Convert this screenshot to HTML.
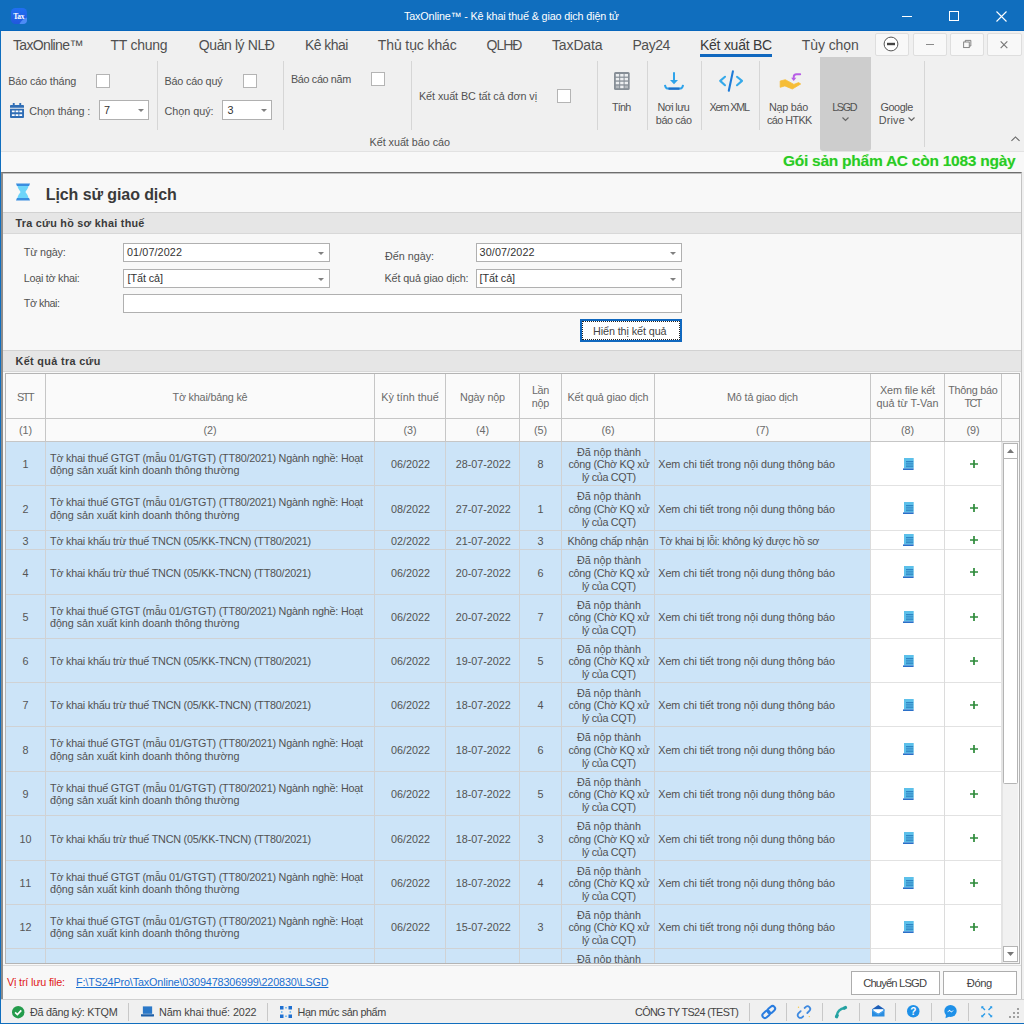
<!DOCTYPE html>
<html lang="vi"><head><meta charset="utf-8"><title>TaxOnline</title>
<style>
*{box-sizing:border-box;margin:0;padding:0}
html,body{width:1024px;height:1024px;overflow:hidden;background:#f0f0f0}
body{font-family:"Liberation Sans","DejaVu Sans",sans-serif;font-size:11px;color:#525252;position:relative}
.a{position:absolute;white-space:nowrap}
svg{position:absolute;display:block;overflow:visible}
#title{left:0;top:0;width:1024px;height:31px;background:#106ebe;border-bottom:1px solid #0766bc}
#title .t{left:0;width:1024px;text-align:center;top:9px;color:#fff;font-size:11px;line-height:14px}
#lb{left:0;top:31px;width:1px;height:993px;background:#106ebe}
#bb{left:0;top:1023px;width:1024px;height:1px;background:#106ebe}
.tab{top:35px;font-size:14.5px;line-height:18px;color:#444}
.wb{top:33px;height:22.500px;width:34.300px;background:#f8f8f8;border:1px solid #dedede;border-radius:2px}
.vsep{width:1px;background:#d6d6d6;top:61px;height:69px}
.rl{font-size:11px;line-height:13px;color:#444}
.cb{width:14px;height:14px;background:#fff;border:1px solid #b4b4b4}
.combo{background:#fff;border:1px solid #b0b0b0;height:20px;font-size:11px;line-height:17px;padding-left:4px;color:#333}
.combo:after{content:"";position:absolute;right:4.5px;top:8px;border:3px solid transparent;border-top:3px solid #808080;border-bottom:0}
.rb{font-size:11px;line-height:13px;color:#444;text-align:center}
#strip{left:1px;top:151px;width:1023px;height:21px;background:#f8f8f8;border-top:1px solid #e2e2e2}
#green{right:8px;top:151px;font-size:15px;line-height:20px;font-weight:bold;color:#22c322;text-shadow:0 0 1px #b6f0b6}
#panel{left:1px;top:172px;width:1021px;height:827px;background:#f8f8f8;border-top:1px solid #6e6e6e;border-left:2px solid #8c8c8c;border-right:1px solid #c4c4c4}
#ptitle{left:46px;top:183px;font-size:16.5px;line-height:20px;font-weight:bold;color:#3a3a3a}
.band{left:3px;width:1018px;height:22px;background:#e6e6e6;border-top:1px solid #d2d2d2;border-bottom:1px solid #d8d8d8;font-weight:bold;font-size:11px;line-height:20px;padding-left:12px;color:#3a3a3a}
.fl{font-size:11px;line-height:13px;color:#444}
.fc{background:#fff;border:1px solid #b0b0b0;height:19px;font-size:11px;line-height:17px;padding-left:3px;color:#333}
.dd:after{content:"";position:absolute;right:5px;top:8px;border:3px solid transparent;border-top:3px solid #808080;border-bottom:0}
#btn{left:580px;top:319px;width:102px;height:22.500px;border:2px solid #1068bf;background:#fff;outline:1px dotted #222;outline-offset:-3px}
#grid{left:5px;top:373px;width:1015px;height:591px;background:#fff;border:1px solid #b4b4b4}
#gb{left:6px;top:442px;width:995px;height:521px;overflow:hidden}
#foot{left:3px;top:964px;width:1018px;height:35px;background:#f8f8f8}
.fbtn{top:971px;height:24px;background:#fff;border:1px solid #adadad;text-align:center;font-size:11px;line-height:22px;color:#333}
#status{left:1px;top:999px;width:1023px;height:24px;background:#f0f0f0;border-top:1px solid #d0d0d0}
.st{top:1006px;font-size:11px;line-height:13px;color:#333}
.ssep{top:1003px;width:1px;height:18px;background:#c8c8c8}
.hl{height:1px;background:#c6c6c6}
.vl{width:1px;background:#c6c6c6}
.rw{left:0;width:995px;background:linear-gradient(90deg,#d0d2d4 864px,#e2e2e2 864px) bottom/100% 1px no-repeat,linear-gradient(90deg,#cce4f8 864px,#fff 864px)}
.vlb{top:0;width:1px;height:521px;background:#d0d2d4}
.vlw{top:0;width:1px;height:521px;background:#dcdcdc}
.sb{width:15px;background:#fff;border:1px solid #b4b4b4}
</style></head><body>
<div id="title" class="a"></div>
<span class="a " style="left:404px;top:9px;font-size:10.8px;line-height:14px;color:#fff;letter-spacing:-0.146px;">TaxOnline™ - Kê khai thuế &amp; giao dịch điện tử</span>
<svg style="left:11px;top:8px" width="16" height="16" viewBox="0 0 16 16"><defs><linearGradient id="ig" x1="0" y1="0" x2="0" y2="1"><stop offset="0" stop-color="#1f6ff2"/><stop offset="1" stop-color="#2257dc"/></linearGradient></defs><rect width="16" height="16" rx="4.500" fill="url(#ig)"/><path d="M8.500 16c1.500-3 4-5.500 7.500-6.500V12a4 4 0 0 1-4 4z" fill="#4d8cf5"/><text x="7.800" y="10.500" font-size="7.500" font-family="Liberation Serif,serif" font-weight="bold" fill="#fff" text-anchor="middle" letter-spacing="-.3">Tax</text></svg>
<svg style="left:895px;top:4.600px" width="120" height="22" viewBox="0 0 120 22"><path d="M7 11.5h10" stroke="#fff" stroke-width="1"/><rect x="54.5" y="6.5" width="9" height="9" fill="none" stroke="#fff" stroke-width="1"/><path d="M101.5 6.5l10 10M111.5 6.5l-10 10" stroke="#fff" stroke-width="1.1"/></svg>
<div id="lb" class="a"></div><div id="bb" class="a"></div>

<span class="a " style="left:13px;top:36px;font-size:14px;line-height:18px;color:#505050;letter-spacing:-0.660px;">TaxOnline™</span>
<span class="a " style="left:110.5px;top:36px;font-size:14px;line-height:18px;color:#505050;letter-spacing:-0.252px;">TT chung</span>
<span class="a " style="left:198.75px;top:36px;font-size:14px;line-height:18px;color:#505050;letter-spacing:-0.396px;">Quản lý NLĐ</span>
<span class="a " style="left:305px;top:36px;font-size:14px;line-height:18px;color:#505050;letter-spacing:-0.570px;">Kê khai</span>
<span class="a " style="left:377.75px;top:36px;font-size:14px;line-height:18px;color:#505050;letter-spacing:-0.101px;">Thủ tục khác</span>
<span class="a " style="left:486.5px;top:36px;font-size:14px;line-height:18px;color:#505050;letter-spacing:-0.973px;">QLHĐ</span>
<span class="a " style="left:552px;top:36px;font-size:14px;line-height:18px;color:#505050;letter-spacing:-0.132px;">TaxData</span>
<span class="a " style="left:632.5px;top:36px;font-size:14px;line-height:18px;color:#505050;letter-spacing:-0.490px;">Pay24</span>
<span class="a " style="left:700px;top:36px;font-size:14px;line-height:18px;color:#3a3a3a;letter-spacing:-0.257px;">Kết xuất BC</span>
<span class="a " style="left:801.75px;top:36px;font-size:14px;line-height:18px;color:#505050;letter-spacing:-0.079px;">Tùy chọn</span>
<div class="a" style="left:700px;top:54px;width:72px;height:3px;background:#1068bf"></div>

<div class="a wb" style="left:874.800px"><svg style="left:7.700px;top:1.500px" width="16" height="16" viewBox="0 0 16 16"><circle cx="8" cy="8" r="6.900" fill="#fff" stroke="#555" stroke-width="1"/><path d="M4 8h8" stroke="#444" stroke-width="2.400"/></svg></div>
<div class="a wb" style="left:912.600px"><div class="a" style="left:12.400px;top:10px;width:8px;height:1px;background:#8a8a8a"></div></div>
<div class="a wb" style="left:949.700px"><svg style="left:12.300px;top:6.200px" width="8.500" height="8" viewBox="0 0 10 10"><path d="M2.500 2.500v-2h7v7h-2" fill="none" stroke="#777" stroke-width="1.100"/><rect x=".5" y="2.500" width="7" height="7" fill="none" stroke="#777" stroke-width="1.100"/></svg></div>
<div class="a wb" style="left:987.300px"><svg style="left:11.700px;top:6.800px" width="8" height="7.500" viewBox="0 0 9 9"><path d="M.5.5l8 8M8.500.5l-8 8" stroke="#777" stroke-width="1.400"/></svg></div>

<span class="a " style="left:8.25px;top:74px;font-size:10.8px;line-height:14px;letter-spacing:-0.131px;">Báo cáo tháng</span>
<div class="a cb" style="left:96px;top:74px"></div>
<svg style="left:10px;top:103px" width="14" height="15" viewBox="0 0 15 16"><path d="M3 0h2v2h5V0h2v2h2a1 1 0 0 1 1 1v2H0V3a1 1 0 0 1 1-1h2zM0 6h15v9a1 1 0 0 1-1 1H1a1 1 0 0 1-1-1z" fill="#2f6db5"/><path d="M2 8h3v2H2zM6 8h3v2H6zM10 8h3v2h-3zM2 12h3v2H2zM6 12h3v2H6zM10 12h3v2h-3z" fill="#fff"/></svg>
<span class="a " style="left:29.25px;top:104px;font-size:10.8px;line-height:14px;letter-spacing:-0.073px;">Chọn tháng :</span>
<div class="a combo" style="left:99px;top:100px;width:50px"></div><span class="a " style="left:104px;top:103px;font-size:10.8px;line-height:14px;color:#333;">7</span>
<div class="a vsep" style="left:157px"></div>
<span class="a " style="left:164.5px;top:74px;font-size:10.8px;line-height:14px;letter-spacing:-0.193px;">Báo cáo quý</span>
<div class="a cb" style="left:243px;top:74px"></div>
<span class="a " style="left:164.5px;top:104px;font-size:10.8px;line-height:14px;letter-spacing:-0.026px;">Chọn quý:</span>
<div class="a combo" style="left:222px;top:100px;width:50px"></div><span class="a " style="left:227.5px;top:103px;font-size:10.8px;line-height:14px;color:#333;">3</span>
<div class="a vsep" style="left:283px"></div>
<span class="a " style="left:291px;top:71.5px;font-size:10.8px;line-height:14px;letter-spacing:-0.345px;">Báo cáo năm</span>
<div class="a cb" style="left:371px;top:72px"></div>
<div class="a vsep" style="left:411px"></div>
<span class="a " style="left:419px;top:89px;font-size:10.8px;line-height:14px;letter-spacing:-0.078px;">Kết xuất BC tất cả đơn vị</span>
<div class="a cb" style="left:557px;top:89px"></div>
<span class="a " style="left:369.5px;top:135px;font-size:10.8px;line-height:14px;letter-spacing:-0.035px;">Kết xuất báo cáo</span>
<div class="a vsep" style="left:597px"></div>
<svg style="left:613.7px;top:71.9px" width="15.7" height="18" viewBox="0 0 15.7 18"><rect width="15.7" height="18" rx="1.5" fill="#868e96"/><g fill="#eceef0"><rect x="1.8" y="2" width="3.4" height="2.6"/><rect x="6.2" y="2" width="3.4" height="2.6"/><rect x="10.6" y="2" width="3.4" height="2.6"/><rect x="1.8" y="5.800" width="3.4" height="2.6"/><rect x="6.2" y="5.800" width="3.4" height="2.6"/><rect x="10.6" y="5.800" width="3.4" height="2.6"/><rect x="1.8" y="9.700" width="3.4" height="2.6"/><rect x="6.2" y="9.700" width="3.4" height="2.6"/><rect x="10.6" y="9.700" width="3.4" height="2.6"/><rect x="6.2" y="13.600" width="3.4" height="2.6"/></g><g fill="#b4b9be"><rect x="1.8" y="13.600" width="3.4" height="2.6"/><rect x="10.6" y="13.600" width="3.4" height="2.6"/></g></svg>
<span class="a " style="left:612px;top:99.75px;font-size:10.8px;line-height:14px;letter-spacing:-0.746px;">Tính</span>
<div class="a vsep" style="left:647px"></div>
<svg style="left:663px;top:71px" width="22" height="20" viewBox="0 0 22 20"><path d="M11 1.2v9" stroke="#2ea3ea" stroke-width="2"/><path d="M7 8.900h8l-4 4.400z" fill="#2ea3ea"/><path d="M2 13.800c.2 2.500 1.400 3.800 3.600 3.800h10.800c2.200 0 3.400-1.300 3.600-3.800" fill="none" stroke="#2ea3ea" stroke-width="2"/><path d="M5.500 17.700h11" stroke="#1e6ec8" stroke-width="2.200"/></svg>
<span class="a " style="left:657.5px;top:99.75px;font-size:10.8px;line-height:14px;letter-spacing:-0.603px;">Nơi lưu</span><span class="a " style="left:655.75px;top:112.75px;font-size:10.8px;line-height:14px;letter-spacing:-0.373px;">báo cáo</span>
<div class="a vsep" style="left:701px"></div>
<svg style="left:718px;top:70px" width="26" height="22" viewBox="0 0 26 22"><path d="M7 6.800L2.200 10.900 7 15.200M19 6.800l5 4.100-5 4.300" fill="none" stroke="#35a9ea" stroke-width="2.100" stroke-linecap="round" stroke-linejoin="round"/><path d="M14.900 1.400L10.800 20.700" stroke="#1e7bd8" stroke-width="2.100" stroke-linecap="round"/></svg>
<span class="a " style="left:709.5px;top:99.75px;font-size:10.8px;line-height:14px;letter-spacing:-1.139px;">Xem XML</span>
<div class="a vsep" style="left:759px"></div>
<svg style="left:772px;top:66px" width="40" height="30" viewBox="0 0 40 30"><path d="M8.200 15L13.300 13.700 21.900 18.400 26.600 16.600 28.700 18 20.300 23 12.900 19.900 8.200 21.300z" fill="#f6bd36" stroke="#f6bd36" stroke-width=".8" stroke-linejoin="round"/><path d="M28.200 8.200H24.500Q21.700 8.200 21.700 11V12.500" fill="none" stroke="#b85ee6" stroke-width="1.900" stroke-linecap="round"/><path d="M19.100 11.800L21.700 15 24.300 11.800z" fill="#b85ee6"/></svg>
<span class="a " style="left:769px;top:99.75px;font-size:10.8px;line-height:14px;letter-spacing:-0.281px;">Nạp báo</span><span class="a " style="left:767px;top:112.75px;font-size:10.8px;line-height:14px;letter-spacing:-0.560px;">cáo HTKK</span>
<div class="a" style="left:820px;top:57px;width:51px;height:94px;background:#cdcdcd;border-radius:0 0 3px 3px"></div>
<span class="a " style="left:832.25px;top:99.75px;font-size:10.8px;line-height:14px;letter-spacing:-1.402px;">LSGD</span>
<svg style="left:842px;top:117px" width="7" height="4" viewBox="0 0 7 4"><path d="M.5.5l3 3 3-3" fill="none" stroke="#666" stroke-width="1.2"/></svg>
<span class="a " style="left:880.5px;top:99.75px;font-size:10.8px;line-height:14px;letter-spacing:-0.423px;">Google</span><span class="a " style="left:878.75px;top:112.75px;font-size:10.8px;line-height:14px;letter-spacing:0.177px;">Drive</span>
<svg style="left:907.500px;top:117px" width="7" height="4" viewBox="0 0 7 4"><path d="M.5.5l3 3 3-3" fill="none" stroke="#666" stroke-width="1.2"/></svg>
<div class="a vsep" style="left:924px;height:86px"></div>
<svg style="left:1010.500px;top:136px" width="9" height="5.400" viewBox="0 0 10 6"><path d="M.5 5.500l4.500-4.500 4.500 4.500" fill="none" stroke="#666" stroke-width="1.2"/></svg>
<div id="strip" class="a"></div>
<span class="a " style="left:783px;top:151.2px;font-size:15.5px;line-height:20px;font-weight:bold;color:#27cb27;letter-spacing:-0.254px;text-shadow:0 0 1px #c8f5a0;">Gói sản phẩm AC còn 1083 ngày</span>
<div id="panel" class="a"></div><div class="a" style="left:3px;top:173px;width:1018px;height:1px;background:#c0c0c0"></div>
<svg style="left:16px;top:183px" width="14" height="18" viewBox="0 0 15 18"><path d="M1.500 1h12c0 4.500-2.500 6-3.300 8 .8 2 3.300 3.500 3.300 8h-12c0-4.500 2.500-6 3.300-8-.8-2-3.300-3.500-3.300-8z" fill="#6dd5fa"/><path d="M0 0h15l-1 2.500H1zM1 15.500h13l1 2.500H0z" fill="#3a8ee0"/></svg>
<span class="a " style="left:45.75px;top:184.5px;font-size:16px;line-height:20px;font-weight:bold;color:#3a3a3a;letter-spacing:-0.091px;">Lịch sử giao dịch</span>
<div class="a band" style="top:212px"></div><span class="a " style="left:15.5px;top:215.75px;font-size:10.8px;line-height:14px;font-weight:bold;color:#3a3a3a;letter-spacing:0.272px;">Tra cứu hồ sơ khai thuế</span>
<span class="a " style="left:23.75px;top:245px;font-size:10.8px;line-height:14px;letter-spacing:-0.167px;">Từ ngày:</span>
<div class="a fc dd" style="left:123px;top:243px;width:207px"></div><span class="a " style="left:127px;top:245px;font-size:10.8px;line-height:14px;color:#333;letter-spacing:0.100px;">01/07/2022</span>
<span class="a " style="left:23.75px;top:270.75px;font-size:10.8px;line-height:14px;letter-spacing:-0.265px;">Loại tờ khai:</span>
<div class="a fc dd" style="left:123px;top:269px;width:207px"></div><span class="a " style="left:127.5px;top:271px;font-size:10.8px;line-height:14px;color:#333;letter-spacing:-0.069px;">[Tất cả]</span>
<span class="a " style="left:23.75px;top:295.75px;font-size:10.8px;line-height:14px;letter-spacing:-0.465px;">Tờ khai:</span>
<div class="a fc" style="left:123px;top:294px;width:559px"></div>
<span class="a " style="left:385px;top:248.6px;font-size:10.8px;line-height:14px;letter-spacing:-0.026px;">Đến ngày:</span>
<div class="a fc dd" style="left:476px;top:243px;width:206px"></div><span class="a " style="left:479.6px;top:245px;font-size:10.8px;line-height:14px;color:#333;letter-spacing:0.100px;">30/07/2022</span>
<span class="a " style="left:384.5px;top:270.75px;font-size:10.8px;line-height:14px;letter-spacing:-0.140px;">Kết quả giao dịch:</span>
<div class="a fc dd" style="left:476px;top:269px;width:206px"></div><span class="a " style="left:479.6px;top:271px;font-size:10.8px;line-height:14px;color:#333;letter-spacing:-0.069px;">[Tất cả]</span>
<div id="btn" class="a"></div><span class="a " style="left:593px;top:324px;font-size:10.8px;line-height:14px;color:#444;letter-spacing:-0.099px;">Hiển thị kết quả</span>
<div class="a band" style="top:350px"></div><span class="a " style="left:15.5px;top:353.75px;font-size:10.8px;line-height:14px;font-weight:bold;color:#3a3a3a;letter-spacing:0.358px;">Kết quả tra cứu</span>
<div id="grid" class="a"></div>
<div class="a" style="left:6px;top:374px;width:1013px;height:68px;background:#fafafa"></div>
<div class="a hl" style="left:6px;top:418px;width:1013px"></div><div class="a hl" style="left:6px;top:441px;width:1013px"></div>
<div class="a vl" style="left:45px;top:374px;height:68px"></div>
<div class="a vl" style="left:374px;top:374px;height:68px"></div>
<div class="a vl" style="left:445px;top:374px;height:68px"></div>
<div class="a vl" style="left:519px;top:374px;height:68px"></div>
<div class="a vl" style="left:561px;top:374px;height:68px"></div>
<div class="a vl" style="left:654px;top:374px;height:68px"></div>
<div class="a vl" style="left:870px;top:374px;height:68px"></div>
<div class="a vl" style="left:944px;top:374px;height:68px"></div>
<div class="a vl" style="left:1001px;top:374px;height:68px"></div>
<span class="a " style="left:17.0px;top:389.75px;font-size:10.8px;line-height:14px;color:#6a6a6a;letter-spacing:-1.363px;">STT</span>
<span class="a " style="left:172.5px;top:389.75px;font-size:10.8px;line-height:14px;color:#6a6a6a;letter-spacing:-0.200px;">Tờ khai/bảng kê</span>
<span class="a " style="left:381.25px;top:389.75px;font-size:10.8px;line-height:14px;color:#6a6a6a;letter-spacing:-0.011px;">Kỳ tính thuế</span>
<span class="a " style="left:460.0px;top:389.75px;font-size:10.8px;line-height:14px;color:#6a6a6a;letter-spacing:-0.165px;">Ngày nộp</span>
<span class="a " style="left:532.0px;top:382.75px;font-size:10.8px;line-height:14px;color:#6a6a6a;letter-spacing:-0.406px;">Lần</span><span class="a " style="left:531.75px;top:395.55px;font-size:10.8px;line-height:14px;color:#6a6a6a;letter-spacing:-0.206px;">nộp</span>
<span class="a " style="left:567.5px;top:389.75px;font-size:10.8px;line-height:14px;color:#6a6a6a;letter-spacing:-0.149px;">Kết quả giao dịch</span>
<span class="a " style="left:727.0px;top:389.75px;font-size:10.8px;line-height:14px;color:#6a6a6a;letter-spacing:-0.154px;">Mô tả giao dịch</span>
<span class="a " style="left:880.0px;top:382.75px;font-size:10.8px;line-height:14px;color:#6a6a6a;letter-spacing:-0.122px;">Xem file kết</span><span class="a " style="left:876.5px;top:395.55px;font-size:10.8px;line-height:14px;color:#6a6a6a;letter-spacing:-0.005px;">quả từ T-Van</span>
<span class="a " style="left:948.25px;top:382.75px;font-size:10.8px;line-height:14px;color:#6a6a6a;letter-spacing:-0.252px;">Thông báo</span><span class="a " style="left:964.5px;top:395.55px;font-size:10.8px;line-height:14px;color:#6a6a6a;letter-spacing:-1.600px;">TCT</span>
<span class="a " style="left:19.0px;top:422.75px;font-size:10.8px;line-height:14px;color:#6a6a6a;letter-spacing:-0.081px;">(1)</span>
<span class="a " style="left:203.5px;top:422.75px;font-size:10.8px;line-height:14px;color:#6a6a6a;letter-spacing:-0.081px;">(2)</span>
<span class="a " style="left:403.5px;top:422.75px;font-size:10.8px;line-height:14px;color:#6a6a6a;letter-spacing:-0.081px;">(3)</span>
<span class="a " style="left:476.0px;top:422.75px;font-size:10.8px;line-height:14px;color:#6a6a6a;letter-spacing:-0.081px;">(4)</span>
<span class="a " style="left:534.0px;top:422.75px;font-size:10.8px;line-height:14px;color:#6a6a6a;letter-spacing:-0.081px;">(5)</span>
<span class="a " style="left:601.5px;top:422.75px;font-size:10.8px;line-height:14px;color:#6a6a6a;letter-spacing:-0.081px;">(6)</span>
<span class="a " style="left:756.0px;top:422.75px;font-size:10.8px;line-height:14px;color:#6a6a6a;letter-spacing:-0.081px;">(7)</span>
<span class="a " style="left:901.0px;top:422.75px;font-size:10.8px;line-height:14px;color:#6a6a6a;letter-spacing:-0.081px;">(8)</span>
<span class="a " style="left:966.5px;top:422.75px;font-size:10.8px;line-height:14px;color:#6a6a6a;letter-spacing:-0.081px;">(9)</span>
<div id="gb" class="a">
<div class="a rw" style="top:0px;height:44px"></div><span class="a " style="left:16.5px;top:15px;font-size:10.8px;line-height:14px;color:#555;letter-spacing:0.000px;">1</span><span class="a " style="left:44px;top:8.5px;font-size:10.8px;line-height:14px;letter-spacing:-0.211px;">Tờ khai thuế GTGT (mẫu 01/GTGT) (TT80/2021) Ngành nghề: Hoạt</span><span class="a " style="left:44px;top:21.2px;font-size:10.8px;line-height:14px;letter-spacing:-0.069px;">động sản xuất kinh doanh thông thường</span><span class="a " style="left:384.9px;top:15px;font-size:10.8px;line-height:14px;letter-spacing:-0.005px;">06/2022</span><span class="a " style="left:449.75px;top:15px;font-size:10.8px;line-height:14px;letter-spacing:-0.025px;">28-07-2022</span><span class="a " style="left:531.5px;top:15px;font-size:10.8px;line-height:14px;letter-spacing:0.000px;">8</span><span class="a " style="left:571.0px;top:2.5px;font-size:10.8px;line-height:14px;letter-spacing:-0.073px;">Đã nộp thành</span><span class="a " style="left:562.5px;top:15.3px;font-size:10.8px;line-height:14px;letter-spacing:-0.284px;">công (Chờ KQ xử</span><span class="a " style="left:576.0px;top:28.1px;font-size:10.8px;line-height:14px;letter-spacing:-0.342px;">lý của CQT)</span><span class="a " style="left:652.25px;top:15px;font-size:10.8px;line-height:14px;letter-spacing:-0.075px;">Xem chi tiết trong nội dung thông báo</span><svg style="left:897px;top:15.5px" width="11" height="12" viewBox="0 0 11 12"><path d="M1 0h9.700v10.500H1z" fill="#5cc0ea"/><path d="M3 3.500h7.200M3 5.200h7.200M3 7h7.200M3 8.700h7.200" stroke="#2a7ec0" stroke-width=".9"/><path d="M0 10.400h10.600V12H0z" fill="#2a6fc8"/></svg><svg style="left:963.7px;top:17.69999999999999px" width="8" height="8" viewBox="0 0 8 8"><path d="M0 4h8M4 0v8" stroke="#2d8a3a" stroke-width="1.700"/></svg><div class="a rw" style="top:44px;height:45px"></div><span class="a " style="left:16.5px;top:59.5px;font-size:10.8px;line-height:14px;color:#555;letter-spacing:0.000px;">2</span><span class="a " style="left:44px;top:53px;font-size:10.8px;line-height:14px;letter-spacing:-0.211px;">Tờ khai thuế GTGT (mẫu 01/GTGT) (TT80/2021) Ngành nghề: Hoạt</span><span class="a " style="left:44px;top:65.7px;font-size:10.8px;line-height:14px;letter-spacing:-0.069px;">động sản xuất kinh doanh thông thường</span><span class="a " style="left:384.9px;top:59.5px;font-size:10.8px;line-height:14px;letter-spacing:-0.005px;">08/2022</span><span class="a " style="left:449.75px;top:59.5px;font-size:10.8px;line-height:14px;letter-spacing:-0.025px;">27-07-2022</span><span class="a " style="left:531.5px;top:59.5px;font-size:10.8px;line-height:14px;letter-spacing:0.000px;">1</span><span class="a " style="left:571.0px;top:47px;font-size:10.8px;line-height:14px;letter-spacing:-0.073px;">Đã nộp thành</span><span class="a " style="left:562.5px;top:59.8px;font-size:10.8px;line-height:14px;letter-spacing:-0.284px;">công (Chờ KQ xử</span><span class="a " style="left:576.0px;top:72.6px;font-size:10.8px;line-height:14px;letter-spacing:-0.342px;">lý của CQT)</span><span class="a " style="left:652.25px;top:59.5px;font-size:10.8px;line-height:14px;letter-spacing:-0.075px;">Xem chi tiết trong nội dung thông báo</span><svg style="left:897px;top:60.0px" width="11" height="12" viewBox="0 0 11 12"><path d="M1 0h9.700v10.500H1z" fill="#5cc0ea"/><path d="M3 3.500h7.200M3 5.200h7.200M3 7h7.200M3 8.700h7.200" stroke="#2a7ec0" stroke-width=".9"/><path d="M0 10.400h10.600V12H0z" fill="#2a6fc8"/></svg><svg style="left:963.7px;top:62.19999999999999px" width="8" height="8" viewBox="0 0 8 8"><path d="M0 4h8M4 0v8" stroke="#2d8a3a" stroke-width="1.700"/></svg><div class="a rw" style="top:89px;height:19px"></div><span class="a " style="left:16.5px;top:91.5px;font-size:10.8px;line-height:14px;color:#555;letter-spacing:0.000px;">3</span><span class="a " style="left:44px;top:91.5px;font-size:10.8px;line-height:14px;letter-spacing:-0.220px;">Tờ khai khấu trừ thuế TNCN (05/KK-TNCN) (TT80/2021)</span><span class="a " style="left:384.9px;top:91.5px;font-size:10.8px;line-height:14px;letter-spacing:-0.005px;">02/2022</span><span class="a " style="left:449.75px;top:91.5px;font-size:10.8px;line-height:14px;letter-spacing:-0.025px;">21-07-2022</span><span class="a " style="left:531.5px;top:91.5px;font-size:10.8px;line-height:14px;letter-spacing:0.000px;">3</span><span class="a " style="left:561.5px;top:91.5px;font-size:10.8px;line-height:14px;letter-spacing:-0.252px;">Không chấp nhận</span><span class="a " style="left:653.25px;top:91.5px;font-size:10.8px;line-height:14px;letter-spacing:-0.293px;">Tờ khai bị lỗi: không ký được hồ sơ</span><svg style="left:897px;top:92.0px" width="11" height="12" viewBox="0 0 11 12"><path d="M1 0h9.700v10.500H1z" fill="#5cc0ea"/><path d="M3 3.500h7.200M3 5.200h7.200M3 7h7.200M3 8.700h7.200" stroke="#2a7ec0" stroke-width=".9"/><path d="M0 10.400h10.600V12H0z" fill="#2a6fc8"/></svg><svg style="left:963.7px;top:94.20000000000005px" width="8" height="8" viewBox="0 0 8 8"><path d="M0 4h8M4 0v8" stroke="#2d8a3a" stroke-width="1.700"/></svg><div class="a rw" style="top:108px;height:45px"></div><span class="a " style="left:16.5px;top:123.5px;font-size:10.8px;line-height:14px;color:#555;letter-spacing:0.000px;">4</span><span class="a " style="left:44px;top:123.5px;font-size:10.8px;line-height:14px;letter-spacing:-0.220px;">Tờ khai khấu trừ thuế TNCN (05/KK-TNCN) (TT80/2021)</span><span class="a " style="left:384.9px;top:123.5px;font-size:10.8px;line-height:14px;letter-spacing:-0.005px;">06/2022</span><span class="a " style="left:449.75px;top:123.5px;font-size:10.8px;line-height:14px;letter-spacing:-0.025px;">20-07-2022</span><span class="a " style="left:531.5px;top:123.5px;font-size:10.8px;line-height:14px;letter-spacing:0.000px;">6</span><span class="a " style="left:571.0px;top:111px;font-size:10.8px;line-height:14px;letter-spacing:-0.073px;">Đã nộp thành</span><span class="a " style="left:562.5px;top:123.8px;font-size:10.8px;line-height:14px;letter-spacing:-0.284px;">công (Chờ KQ xử</span><span class="a " style="left:576.0px;top:136.6px;font-size:10.8px;line-height:14px;letter-spacing:-0.342px;">lý của CQT)</span><span class="a " style="left:652.25px;top:123.5px;font-size:10.8px;line-height:14px;letter-spacing:-0.075px;">Xem chi tiết trong nội dung thông báo</span><svg style="left:897px;top:124.0px" width="11" height="12" viewBox="0 0 11 12"><path d="M1 0h9.700v10.500H1z" fill="#5cc0ea"/><path d="M3 3.500h7.200M3 5.200h7.200M3 7h7.200M3 8.700h7.200" stroke="#2a7ec0" stroke-width=".9"/><path d="M0 10.400h10.600V12H0z" fill="#2a6fc8"/></svg><svg style="left:963.7px;top:126.20000000000005px" width="8" height="8" viewBox="0 0 8 8"><path d="M0 4h8M4 0v8" stroke="#2d8a3a" stroke-width="1.700"/></svg><div class="a rw" style="top:153px;height:44px"></div><span class="a " style="left:16.5px;top:168px;font-size:10.8px;line-height:14px;color:#555;letter-spacing:0.000px;">5</span><span class="a " style="left:44px;top:161.5px;font-size:10.8px;line-height:14px;letter-spacing:-0.211px;">Tờ khai thuế GTGT (mẫu 01/GTGT) (TT80/2021) Ngành nghề: Hoạt</span><span class="a " style="left:44px;top:174.2px;font-size:10.8px;line-height:14px;letter-spacing:-0.069px;">động sản xuất kinh doanh thông thường</span><span class="a " style="left:384.9px;top:168px;font-size:10.8px;line-height:14px;letter-spacing:-0.005px;">06/2022</span><span class="a " style="left:449.75px;top:168px;font-size:10.8px;line-height:14px;letter-spacing:-0.025px;">20-07-2022</span><span class="a " style="left:531.5px;top:168px;font-size:10.8px;line-height:14px;letter-spacing:0.000px;">7</span><span class="a " style="left:571.0px;top:155.5px;font-size:10.8px;line-height:14px;letter-spacing:-0.073px;">Đã nộp thành</span><span class="a " style="left:562.5px;top:168.3px;font-size:10.8px;line-height:14px;letter-spacing:-0.284px;">công (Chờ KQ xử</span><span class="a " style="left:576.0px;top:181.1px;font-size:10.8px;line-height:14px;letter-spacing:-0.342px;">lý của CQT)</span><span class="a " style="left:652.25px;top:168px;font-size:10.8px;line-height:14px;letter-spacing:-0.075px;">Xem chi tiết trong nội dung thông báo</span><svg style="left:897px;top:168.5px" width="11" height="12" viewBox="0 0 11 12"><path d="M1 0h9.700v10.500H1z" fill="#5cc0ea"/><path d="M3 3.500h7.200M3 5.200h7.200M3 7h7.200M3 8.700h7.200" stroke="#2a7ec0" stroke-width=".9"/><path d="M0 10.400h10.600V12H0z" fill="#2a6fc8"/></svg><svg style="left:963.7px;top:170.70000000000005px" width="8" height="8" viewBox="0 0 8 8"><path d="M0 4h8M4 0v8" stroke="#2d8a3a" stroke-width="1.700"/></svg><div class="a rw" style="top:197px;height:44px"></div><span class="a " style="left:16.5px;top:212px;font-size:10.8px;line-height:14px;color:#555;letter-spacing:0.000px;">6</span><span class="a " style="left:44px;top:212px;font-size:10.8px;line-height:14px;letter-spacing:-0.220px;">Tờ khai khấu trừ thuế TNCN (05/KK-TNCN) (TT80/2021)</span><span class="a " style="left:384.9px;top:212px;font-size:10.8px;line-height:14px;letter-spacing:-0.005px;">06/2022</span><span class="a " style="left:449.75px;top:212px;font-size:10.8px;line-height:14px;letter-spacing:-0.025px;">19-07-2022</span><span class="a " style="left:531.5px;top:212px;font-size:10.8px;line-height:14px;letter-spacing:0.000px;">5</span><span class="a " style="left:571.0px;top:199.5px;font-size:10.8px;line-height:14px;letter-spacing:-0.073px;">Đã nộp thành</span><span class="a " style="left:562.5px;top:212.3px;font-size:10.8px;line-height:14px;letter-spacing:-0.284px;">công (Chờ KQ xử</span><span class="a " style="left:576.0px;top:225.1px;font-size:10.8px;line-height:14px;letter-spacing:-0.342px;">lý của CQT)</span><span class="a " style="left:652.25px;top:212px;font-size:10.8px;line-height:14px;letter-spacing:-0.075px;">Xem chi tiết trong nội dung thông báo</span><svg style="left:897px;top:212.5px" width="11" height="12" viewBox="0 0 11 12"><path d="M1 0h9.700v10.500H1z" fill="#5cc0ea"/><path d="M3 3.500h7.200M3 5.200h7.200M3 7h7.200M3 8.700h7.200" stroke="#2a7ec0" stroke-width=".9"/><path d="M0 10.400h10.600V12H0z" fill="#2a6fc8"/></svg><svg style="left:963.7px;top:214.70000000000005px" width="8" height="8" viewBox="0 0 8 8"><path d="M0 4h8M4 0v8" stroke="#2d8a3a" stroke-width="1.700"/></svg><div class="a rw" style="top:241px;height:44px"></div><span class="a " style="left:16.5px;top:256px;font-size:10.8px;line-height:14px;color:#555;letter-spacing:0.000px;">7</span><span class="a " style="left:44px;top:256px;font-size:10.8px;line-height:14px;letter-spacing:-0.220px;">Tờ khai khấu trừ thuế TNCN (05/KK-TNCN) (TT80/2021)</span><span class="a " style="left:384.9px;top:256px;font-size:10.8px;line-height:14px;letter-spacing:-0.005px;">06/2022</span><span class="a " style="left:449.75px;top:256px;font-size:10.8px;line-height:14px;letter-spacing:-0.025px;">18-07-2022</span><span class="a " style="left:531.5px;top:256px;font-size:10.8px;line-height:14px;letter-spacing:0.000px;">4</span><span class="a " style="left:571.0px;top:243.5px;font-size:10.8px;line-height:14px;letter-spacing:-0.073px;">Đã nộp thành</span><span class="a " style="left:562.5px;top:256.3px;font-size:10.8px;line-height:14px;letter-spacing:-0.284px;">công (Chờ KQ xử</span><span class="a " style="left:576.0px;top:269.1px;font-size:10.8px;line-height:14px;letter-spacing:-0.342px;">lý của CQT)</span><span class="a " style="left:652.25px;top:256px;font-size:10.8px;line-height:14px;letter-spacing:-0.075px;">Xem chi tiết trong nội dung thông báo</span><svg style="left:897px;top:256.5px" width="11" height="12" viewBox="0 0 11 12"><path d="M1 0h9.700v10.500H1z" fill="#5cc0ea"/><path d="M3 3.500h7.200M3 5.200h7.200M3 7h7.200M3 8.700h7.200" stroke="#2a7ec0" stroke-width=".9"/><path d="M0 10.400h10.600V12H0z" fill="#2a6fc8"/></svg><svg style="left:963.7px;top:258.70000000000005px" width="8" height="8" viewBox="0 0 8 8"><path d="M0 4h8M4 0v8" stroke="#2d8a3a" stroke-width="1.700"/></svg><div class="a rw" style="top:285px;height:45px"></div><span class="a " style="left:16.5px;top:300.5px;font-size:10.8px;line-height:14px;color:#555;letter-spacing:0.000px;">8</span><span class="a " style="left:44px;top:294px;font-size:10.8px;line-height:14px;letter-spacing:-0.211px;">Tờ khai thuế GTGT (mẫu 01/GTGT) (TT80/2021) Ngành nghề: Hoạt</span><span class="a " style="left:44px;top:306.7px;font-size:10.8px;line-height:14px;letter-spacing:-0.069px;">động sản xuất kinh doanh thông thường</span><span class="a " style="left:384.9px;top:300.5px;font-size:10.8px;line-height:14px;letter-spacing:-0.005px;">06/2022</span><span class="a " style="left:449.75px;top:300.5px;font-size:10.8px;line-height:14px;letter-spacing:-0.025px;">18-07-2022</span><span class="a " style="left:531.5px;top:300.5px;font-size:10.8px;line-height:14px;letter-spacing:0.000px;">6</span><span class="a " style="left:571.0px;top:288px;font-size:10.8px;line-height:14px;letter-spacing:-0.073px;">Đã nộp thành</span><span class="a " style="left:562.5px;top:300.8px;font-size:10.8px;line-height:14px;letter-spacing:-0.284px;">công (Chờ KQ xử</span><span class="a " style="left:576.0px;top:313.6px;font-size:10.8px;line-height:14px;letter-spacing:-0.342px;">lý của CQT)</span><span class="a " style="left:652.25px;top:300.5px;font-size:10.8px;line-height:14px;letter-spacing:-0.075px;">Xem chi tiết trong nội dung thông báo</span><svg style="left:897px;top:301.0px" width="11" height="12" viewBox="0 0 11 12"><path d="M1 0h9.700v10.500H1z" fill="#5cc0ea"/><path d="M3 3.500h7.200M3 5.200h7.200M3 7h7.200M3 8.700h7.200" stroke="#2a7ec0" stroke-width=".9"/><path d="M0 10.400h10.600V12H0z" fill="#2a6fc8"/></svg><svg style="left:963.7px;top:303.20000000000005px" width="8" height="8" viewBox="0 0 8 8"><path d="M0 4h8M4 0v8" stroke="#2d8a3a" stroke-width="1.700"/></svg><div class="a rw" style="top:330px;height:44px"></div><span class="a " style="left:16.5px;top:345px;font-size:10.8px;line-height:14px;color:#555;letter-spacing:0.000px;">9</span><span class="a " style="left:44px;top:338.5px;font-size:10.8px;line-height:14px;letter-spacing:-0.211px;">Tờ khai thuế GTGT (mẫu 01/GTGT) (TT80/2021) Ngành nghề: Hoạt</span><span class="a " style="left:44px;top:351.2px;font-size:10.8px;line-height:14px;letter-spacing:-0.069px;">động sản xuất kinh doanh thông thường</span><span class="a " style="left:384.9px;top:345px;font-size:10.8px;line-height:14px;letter-spacing:-0.005px;">06/2022</span><span class="a " style="left:449.75px;top:345px;font-size:10.8px;line-height:14px;letter-spacing:-0.025px;">18-07-2022</span><span class="a " style="left:531.5px;top:345px;font-size:10.8px;line-height:14px;letter-spacing:0.000px;">5</span><span class="a " style="left:571.0px;top:332.5px;font-size:10.8px;line-height:14px;letter-spacing:-0.073px;">Đã nộp thành</span><span class="a " style="left:562.5px;top:345.3px;font-size:10.8px;line-height:14px;letter-spacing:-0.284px;">công (Chờ KQ xử</span><span class="a " style="left:576.0px;top:358.1px;font-size:10.8px;line-height:14px;letter-spacing:-0.342px;">lý của CQT)</span><span class="a " style="left:652.25px;top:345px;font-size:10.8px;line-height:14px;letter-spacing:-0.075px;">Xem chi tiết trong nội dung thông báo</span><svg style="left:897px;top:345.5px" width="11" height="12" viewBox="0 0 11 12"><path d="M1 0h9.700v10.500H1z" fill="#5cc0ea"/><path d="M3 3.500h7.200M3 5.200h7.200M3 7h7.200M3 8.700h7.200" stroke="#2a7ec0" stroke-width=".9"/><path d="M0 10.400h10.600V12H0z" fill="#2a6fc8"/></svg><svg style="left:963.7px;top:347.70000000000005px" width="8" height="8" viewBox="0 0 8 8"><path d="M0 4h8M4 0v8" stroke="#2d8a3a" stroke-width="1.700"/></svg><div class="a rw" style="top:374px;height:45px"></div><span class="a " style="left:13.5px;top:389.5px;font-size:10.8px;line-height:14px;color:#555;letter-spacing:-0.010px;">10</span><span class="a " style="left:44px;top:389.5px;font-size:10.8px;line-height:14px;letter-spacing:-0.220px;">Tờ khai khấu trừ thuế TNCN (05/KK-TNCN) (TT80/2021)</span><span class="a " style="left:384.9px;top:389.5px;font-size:10.8px;line-height:14px;letter-spacing:-0.005px;">06/2022</span><span class="a " style="left:449.75px;top:389.5px;font-size:10.8px;line-height:14px;letter-spacing:-0.025px;">18-07-2022</span><span class="a " style="left:531.5px;top:389.5px;font-size:10.8px;line-height:14px;letter-spacing:0.000px;">3</span><span class="a " style="left:571.0px;top:377px;font-size:10.8px;line-height:14px;letter-spacing:-0.073px;">Đã nộp thành</span><span class="a " style="left:562.5px;top:389.8px;font-size:10.8px;line-height:14px;letter-spacing:-0.284px;">công (Chờ KQ xử</span><span class="a " style="left:576.0px;top:402.6px;font-size:10.8px;line-height:14px;letter-spacing:-0.342px;">lý của CQT)</span><span class="a " style="left:652.25px;top:389.5px;font-size:10.8px;line-height:14px;letter-spacing:-0.075px;">Xem chi tiết trong nội dung thông báo</span><svg style="left:897px;top:390.0px" width="11" height="12" viewBox="0 0 11 12"><path d="M1 0h9.700v10.500H1z" fill="#5cc0ea"/><path d="M3 3.500h7.200M3 5.200h7.200M3 7h7.200M3 8.700h7.200" stroke="#2a7ec0" stroke-width=".9"/><path d="M0 10.400h10.600V12H0z" fill="#2a6fc8"/></svg><svg style="left:963.7px;top:392.20000000000005px" width="8" height="8" viewBox="0 0 8 8"><path d="M0 4h8M4 0v8" stroke="#2d8a3a" stroke-width="1.700"/></svg><div class="a rw" style="top:419px;height:44px"></div><span class="a " style="left:13.5px;top:434px;font-size:10.8px;line-height:14px;color:#555;letter-spacing:0.521px;">11</span><span class="a " style="left:44px;top:427.5px;font-size:10.8px;line-height:14px;letter-spacing:-0.211px;">Tờ khai thuế GTGT (mẫu 01/GTGT) (TT80/2021) Ngành nghề: Hoạt</span><span class="a " style="left:44px;top:440.2px;font-size:10.8px;line-height:14px;letter-spacing:-0.069px;">động sản xuất kinh doanh thông thường</span><span class="a " style="left:384.9px;top:434px;font-size:10.8px;line-height:14px;letter-spacing:-0.005px;">06/2022</span><span class="a " style="left:449.75px;top:434px;font-size:10.8px;line-height:14px;letter-spacing:-0.025px;">18-07-2022</span><span class="a " style="left:531.5px;top:434px;font-size:10.8px;line-height:14px;letter-spacing:0.000px;">4</span><span class="a " style="left:571.0px;top:421.5px;font-size:10.8px;line-height:14px;letter-spacing:-0.073px;">Đã nộp thành</span><span class="a " style="left:562.5px;top:434.3px;font-size:10.8px;line-height:14px;letter-spacing:-0.284px;">công (Chờ KQ xử</span><span class="a " style="left:576.0px;top:447.1px;font-size:10.8px;line-height:14px;letter-spacing:-0.342px;">lý của CQT)</span><span class="a " style="left:652.25px;top:434px;font-size:10.8px;line-height:14px;letter-spacing:-0.075px;">Xem chi tiết trong nội dung thông báo</span><svg style="left:897px;top:434.5px" width="11" height="12" viewBox="0 0 11 12"><path d="M1 0h9.700v10.500H1z" fill="#5cc0ea"/><path d="M3 3.500h7.200M3 5.200h7.200M3 7h7.200M3 8.700h7.200" stroke="#2a7ec0" stroke-width=".9"/><path d="M0 10.400h10.600V12H0z" fill="#2a6fc8"/></svg><svg style="left:963.7px;top:436.70000000000005px" width="8" height="8" viewBox="0 0 8 8"><path d="M0 4h8M4 0v8" stroke="#2d8a3a" stroke-width="1.700"/></svg><div class="a rw" style="top:463px;height:44px"></div><span class="a " style="left:13.5px;top:478px;font-size:10.8px;line-height:14px;color:#555;letter-spacing:-0.010px;">12</span><span class="a " style="left:44px;top:471.5px;font-size:10.8px;line-height:14px;letter-spacing:-0.211px;">Tờ khai thuế GTGT (mẫu 01/GTGT) (TT80/2021) Ngành nghề: Hoạt</span><span class="a " style="left:44px;top:484.2px;font-size:10.8px;line-height:14px;letter-spacing:-0.069px;">động sản xuất kinh doanh thông thường</span><span class="a " style="left:384.9px;top:478px;font-size:10.8px;line-height:14px;letter-spacing:-0.005px;">06/2022</span><span class="a " style="left:449.75px;top:478px;font-size:10.8px;line-height:14px;letter-spacing:-0.025px;">15-07-2022</span><span class="a " style="left:531.5px;top:478px;font-size:10.8px;line-height:14px;letter-spacing:0.000px;">3</span><span class="a " style="left:571.0px;top:465.5px;font-size:10.8px;line-height:14px;letter-spacing:-0.073px;">Đã nộp thành</span><span class="a " style="left:562.5px;top:478.3px;font-size:10.8px;line-height:14px;letter-spacing:-0.284px;">công (Chờ KQ xử</span><span class="a " style="left:576.0px;top:491.1px;font-size:10.8px;line-height:14px;letter-spacing:-0.342px;">lý của CQT)</span><span class="a " style="left:652.25px;top:478px;font-size:10.8px;line-height:14px;letter-spacing:-0.075px;">Xem chi tiết trong nội dung thông báo</span><svg style="left:897px;top:478.5px" width="11" height="12" viewBox="0 0 11 12"><path d="M1 0h9.700v10.500H1z" fill="#5cc0ea"/><path d="M3 3.500h7.200M3 5.200h7.200M3 7h7.200M3 8.700h7.200" stroke="#2a7ec0" stroke-width=".9"/><path d="M0 10.400h10.600V12H0z" fill="#2a6fc8"/></svg><svg style="left:963.7px;top:480.70000000000005px" width="8" height="8" viewBox="0 0 8 8"><path d="M0 4h8M4 0v8" stroke="#2d8a3a" stroke-width="1.700"/></svg><div class="a rw" style="top:507px;height:45px"></div><span class="a " style="left:13.5px;top:522.5px;font-size:10.8px;line-height:14px;color:#555;letter-spacing:-0.010px;">13</span><span class="a " style="left:571.0px;top:510px;font-size:10.8px;line-height:14px;letter-spacing:-0.073px;">Đã nộp thành</span><span class="a " style="left:562.5px;top:522.8px;font-size:10.8px;line-height:14px;letter-spacing:-0.284px;">công (Chờ KQ xử</span><span class="a " style="left:576.0px;top:535.6px;font-size:10.8px;line-height:14px;letter-spacing:-0.342px;">lý của CQT)</span><svg style="left:897px;top:523.0px" width="11" height="12" viewBox="0 0 11 12"><path d="M1 0h9.700v10.500H1z" fill="#5cc0ea"/><path d="M3 3.500h7.200M3 5.200h7.200M3 7h7.200M3 8.700h7.200" stroke="#2a7ec0" stroke-width=".9"/><path d="M0 10.400h10.600V12H0z" fill="#2a6fc8"/></svg><svg style="left:963.7px;top:525.2px" width="8" height="8" viewBox="0 0 8 8"><path d="M0 4h8M4 0v8" stroke="#2d8a3a" stroke-width="1.700"/></svg>
<div class="a vlb" style="left:39px"></div>
<div class="a vlb" style="left:368px"></div>
<div class="a vlb" style="left:439px"></div>
<div class="a vlb" style="left:513px"></div>
<div class="a vlb" style="left:555px"></div>
<div class="a vlb" style="left:648px"></div>
<div class="a vlw" style="left:864px"></div>
<div class="a vlw" style="left:938px"></div>
</div>
<div class="a" style="left:1001px;top:442px;width:18px;height:521px;background:#f1f1f1;border-left:2px solid #e4e4e4;border-right:1px solid #fafafa"></div>
<div class="a sb" style="left:1003px;top:443px;height:16px"><svg style="left:3px;top:5px" width="7" height="4" viewBox="0 0 7 4"><path d="M0 4l3.500-4L7 4z" fill="#777"/></svg></div>
<div class="a sb" style="left:1003px;top:458px;height:326px;border-radius:0 0 1.5px 1.5px"></div>
<div class="a sb" style="left:1003px;top:946px;height:16px"><svg style="left:3px;top:5px" width="7" height="4" viewBox="0 0 7 4"><path d="M0 0l3.500 4L7 0z" fill="#777"/></svg></div>
<div id="foot" class="a"></div><div class="a" style="left:3px;top:965px;width:1018px;height:1px;background:#dcdcdc"></div>
<span class="a " style="left:7px;top:975.25px;font-size:10.8px;line-height:14px;color:#e02020;letter-spacing:-0.170px;">Vị trí lưu file:</span>
<span class="a " style="left:76px;top:975.25px;font-size:10.8px;line-height:14px;color:#1a6fd0;letter-spacing:-0.137px;text-decoration:underline;">F:\TS24Pro\TaxOnline\0309478306999\220830\LSGD</span>
<div class="a fbtn" style="left:851px;width:89px"></div><span class="a " style="left:863.2px;top:976.2px;font-size:11.2px;line-height:14px;color:#444;letter-spacing:-0.832px;">Chuyển LSGD</span>
<div class="a fbtn" style="left:943px;width:74px"></div><span class="a " style="left:966.8px;top:976.2px;font-size:11.2px;line-height:14px;color:#444;letter-spacing:-0.443px;">Đóng</span>
<div id="status" class="a"></div>
<svg style="left:11.600px;top:1005.500px" width="12.400" height="12.400" viewBox="0 0 12 12"><circle cx="6" cy="6" r="6" fill="#249c4c"/><path d="M3 6.200l2.200 2.200L9 4.200" fill="none" stroke="#fff" stroke-width="1.6"/></svg>
<span class="a " style="left:30px;top:1005.3px;font-size:10.8px;line-height:14px;color:#444;letter-spacing:-0.278px;">Đã đăng ký: KTQM</span>
<div class="a ssep" style="left:128px"></div>
<svg style="left:141px;top:1006.200px" width="13" height="11" viewBox="0 0 14 11"><path d="M2 0h10v8H2z" fill="#2a78c8"/><path d="M0 8.500h14V10a1 1 0 0 1-1 1H1a1 1 0 0 1-1-1z" fill="#1d5fa8"/></svg>
<span class="a " style="left:159px;top:1005.3px;font-size:10.8px;line-height:14px;color:#444;letter-spacing:-0.116px;">Năm khai thuế: 2022</span>
<div class="a ssep" style="left:267px"></div>
<svg style="left:280px;top:1006px" width="12" height="12" viewBox="0 0 12 12"><path d="M0 0h3.500v3.500H0zM8.500 0H12v3.500H8.500zM0 8.500h3.500V12H0zM8.500 8.500H12V12H8.500z" fill="#1e6fd0"/><path d="M5 1h2v1.500H5zM1 5h1.500v2H1zM9.500 5H11v2H9.500zM5 9.500h2V11H5z" fill="#7fc0f0"/></svg>
<span class="a " style="left:297.5px;top:1005.3px;font-size:10.8px;line-height:14px;color:#444;letter-spacing:-0.409px;">Hạn mức sản phẩm</span>
<span class="a " style="left:635px;top:1005.3px;font-size:10.8px;line-height:14px;color:#444;letter-spacing:-0.633px;">CÔNG TY TS24 (TEST)</span>
<div class="a ssep" style="left:749px"></div>
<div class="a ssep" style="left:786px"></div>
<div class="a ssep" style="left:822px"></div>
<div class="a ssep" style="left:859px"></div>
<div class="a ssep" style="left:895px"></div>
<div class="a ssep" style="left:931px"></div>
<div class="a ssep" style="left:968px"></div>
<svg style="left:760px;top:1003px" width="18" height="18" viewBox="0 0 18 18"><g fill="none" stroke="#2a7de0" stroke-width="2"><rect x="-4.200" y="-2.600" width="8.400" height="5.200" rx="2.600" transform="translate(6.200 11.300) rotate(-42)"/><rect x="-4.200" y="-2.600" width="8.400" height="5.200" rx="2.600" transform="translate(11.300 6.700) rotate(-42)"/></g></svg>
<svg style="left:795px;top:1003px" width="18" height="18" viewBox="0 0 18 18"><g fill="none" stroke="#3f8ae0" stroke-width="1.800" stroke-linecap="round"><path d="M8.200 13.300l-1 .9a2.700 2.700 0 0 1-3.800-3.800l2.300-2.300"/><path d="M9.600 5l1.200-1.100a2.700 2.700 0 0 1 3.800 3.800l-2.300 2.300"/></g><g fill="#f2c84a"><circle cx="3.500" cy="4.200" r=".7"/><circle cx="14.300" cy="13.600" r=".7"/></g></svg>
<svg style="left:832px;top:1003px" width="18" height="18" viewBox="0 0 18 18"><path d="M4.500 13.300c.6-4.300 3.400-7.500 8.300-8.300" fill="none" stroke="#2aa7a7" stroke-width="2.400" stroke-linecap="round"/><rect x="-2.200" y="-1.600" width="4.400" height="3.200" rx="1.200" transform="translate(12.900 4.800) rotate(-25)" fill="#24a0a0"/><rect x="-2.200" y="-1.600" width="4.400" height="3.200" rx="1.200" transform="translate(4.900 13.100) rotate(-65)" fill="#24a0a0"/></svg>
<svg style="left:871.500px;top:1005px" width="12.500" height="11.500" viewBox="0 0 12.500 11.500"><path d="M0 4.200L6.250 0l6.250 4.200z" fill="#1e5fb8"/><path d="M0 4.200h12.500v7.300H0z" fill="#2a8de0"/><path d="M1.300 4.200h9.900v2L6.250 8.800 1.300 6.200z" fill="#fff"/><path d="M0 4.500l6.250 4.300 6.250-4.300v1.400L6.250 10.200 0 5.900z" fill="#4aa3ee"/></svg>
<svg style="left:907px;top:1005px" width="12.500" height="12.500" viewBox="0 0 12.500 12.500"><circle cx="6.250" cy="6.250" r="6.250" fill="#1e90e8"/><text x="6.250" y="10" font-size="10" font-weight="bold" font-family="Liberation Sans,sans-serif" fill="#fff" text-anchor="middle">?</text></svg>
<svg style="left:944px;top:1005px" width="13" height="13.500" viewBox="0 0 13 13.500"><ellipse cx="6.500" cy="6" rx="6.200" ry="5.900" fill="#1e90e8"/><path d="M2 9.500L1.500 13.300 5.500 11.500z" fill="#1e90e8"/><path d="M2.800 7.600L5.500 4.700 7.300 6.400 10.200 4.700 7.500 7.600 5.700 5.900z" fill="#fff"/></svg>
<svg style="left:980.500px;top:1006px" width="11.500" height="11.500" viewBox="0 0 11.500 11.500"><g stroke="#2a9be8" stroke-width="1.400" fill="#2a9be8"><path d="M4 4L1 1M7.500 4l3-3M4 7.500l-3 3M7.500 7.500l3 3"/><path d="M.3.300h2.500L.3 2.800zM11.200.3v2.500L8.700.3zM.3 11.200V8.700l2.500 2.500zM11.200 11.200H8.700l2.500-2.500z" stroke="none"/></g></svg>
<svg style="left:1008px;top:1008px" width="11" height="11" viewBox="0 0 11 11"><g fill="#a0a0a0"><rect x="9" y="0" width="2" height="2"/><rect x="5" y="4" width="2" height="2"/><rect x="9" y="4" width="2" height="2"/><rect x="1" y="8" width="2" height="2"/><rect x="5" y="8" width="2" height="2"/><rect x="9" y="8" width="2" height="2"/></g></svg>
</body></html>
